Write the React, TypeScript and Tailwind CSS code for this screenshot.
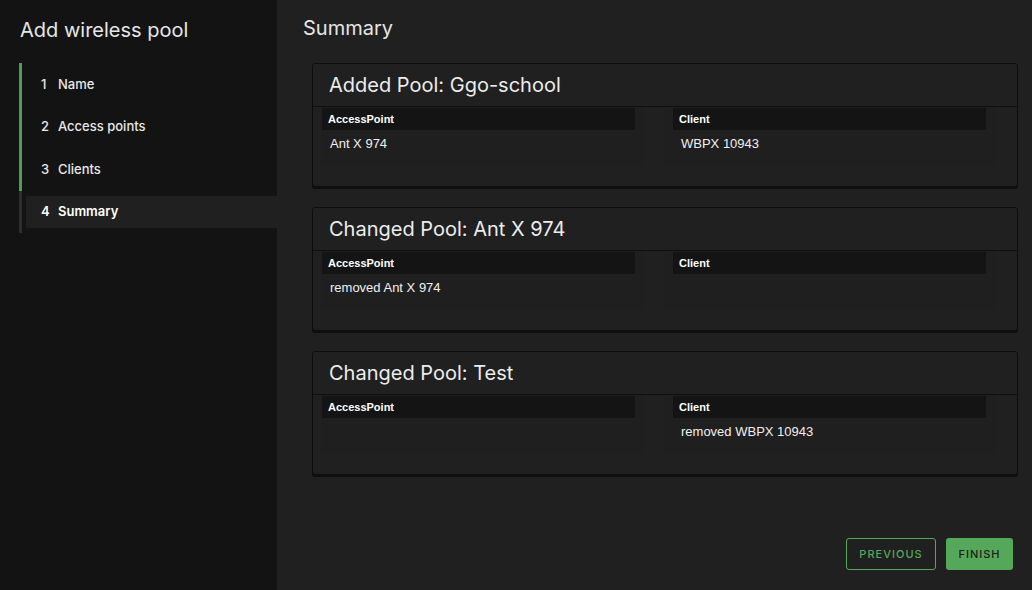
const STEPS = [
  { n: 1, label: "Name", done: true },
  { n: 2, label: "Access points", done: true },
  { n: 3, label: "Clients", done: true },
  { n: 4, label: "Summary", done: false },
];

const POOLS = [
  { title: "Added Pool: Ggo-school", ap: "Ant X 974", client: "WBPX 10943" },
  { title: "Changed Pool: Ant X 974", ap: "removed Ant X 974", client: "" },
  { title: "Changed Pool: Test", ap: "", client: "removed WBPX 10943" },
];

const SANS = "font-['Inter','Lato',sans-serif]";

function Column({ label, value }: { label: string; value: string }) {
  return (
    <div className="h-[58px] bg-[#1f1f1f] pt-[1px] pr-[9px]">
      <div className="flex h-[22px] items-center bg-[#141414] pl-[6px] font-['Liberation_Sans',Arial,sans-serif] text-[11px] font-bold text-white">
        {label}
      </div>
      <div className="flex h-[24px] items-center pt-[4px] pl-[8px] font-['Liberation_Sans',Arial,sans-serif] text-[13px] text-[#f0f0f0]">
        {value}
      </div>
    </div>
  );
}

function PoolCard({ title, ap, client }: { title: string; ap: string; client: string }) {
  return (
    <div className="ml-[9px] h-[124px] rounded-[3px] border border-[#0d0d0d] bg-[#202020] shadow-[0_2px_0_#0e0e0e]">
      <div className={`flex h-[43px] items-center border-b border-[#0f0f0f] pl-[16px] text-[20px] text-[#ececec] ${SANS}`}>
        {title}
      </div>
      <div className="flex pl-[9px]">
        <div className="w-[322px]">
          <Column label="AccessPoint" value={ap} />
        </div>
        <div className="ml-[19px] w-[332px] bg-[#1f1f1f] pl-[10px]">
          <Column label="Client" value={client} />
        </div>
      </div>
    </div>
  );
}

export default function App() {
  return (
    <div className={`flex h-[590px] w-[1032px] overflow-hidden bg-[#202020] ${SANS}`}>
      <aside className="w-[277px] shrink-0 bg-[#131313]">
        <h1 className="pl-5 pt-[16px] text-[20px] leading-[28px] text-[#e6e6e6]">Add wireless pool</h1>
        <nav className="mt-[19px] ml-[19px]">
          {STEPS.map((s) => (
            <div
              key={s.n}
              className={`flex h-[42.5px] items-center border-l-[3px] pl-[4px] ${
                s.done ? "border-[#4f9f53]" : "border-[#2e2e2e]"
              }`}
            >
              <div
                className={`flex h-8 w-full items-center pl-[15px] text-[13px] ${
                  s.done ? "font-medium text-[#e8e8e8]" : "bg-[#202020] font-semibold text-white"
                }`}
              >
                <span className="w-[17px]">{s.n}</span>
                <span>{s.label}</span>
              </div>
            </div>
          ))}
        </nav>
      </aside>
      <main className="flex flex-1 flex-col pl-[26px] pr-[14px] pt-[14px] pb-5">
        <h2 className="text-[20px] leading-[28px] text-[#e6e6e6]">Summary</h2>
        <div className="mt-[21px] flex flex-col gap-[20px]">
          {POOLS.map((p) => (
            <PoolCard key={p.title} {...p} />
          ))}
        </div>
        <div className="mt-auto mr-[5px] flex justify-end gap-[10px]">
          <button className="h-8 w-[90px] rounded-[3px] border border-[#55a85a] text-[11px] font-medium tracking-[1px] text-[#55a85a]">
            PREVIOUS
          </button>
          <button className="h-8 w-[67px] rounded-[3px] bg-[#55a85a] text-[11px] font-medium tracking-[1px] text-[#1a1a1a]">
            FINISH
          </button>
        </div>
      </main>
    </div>
  );
}
